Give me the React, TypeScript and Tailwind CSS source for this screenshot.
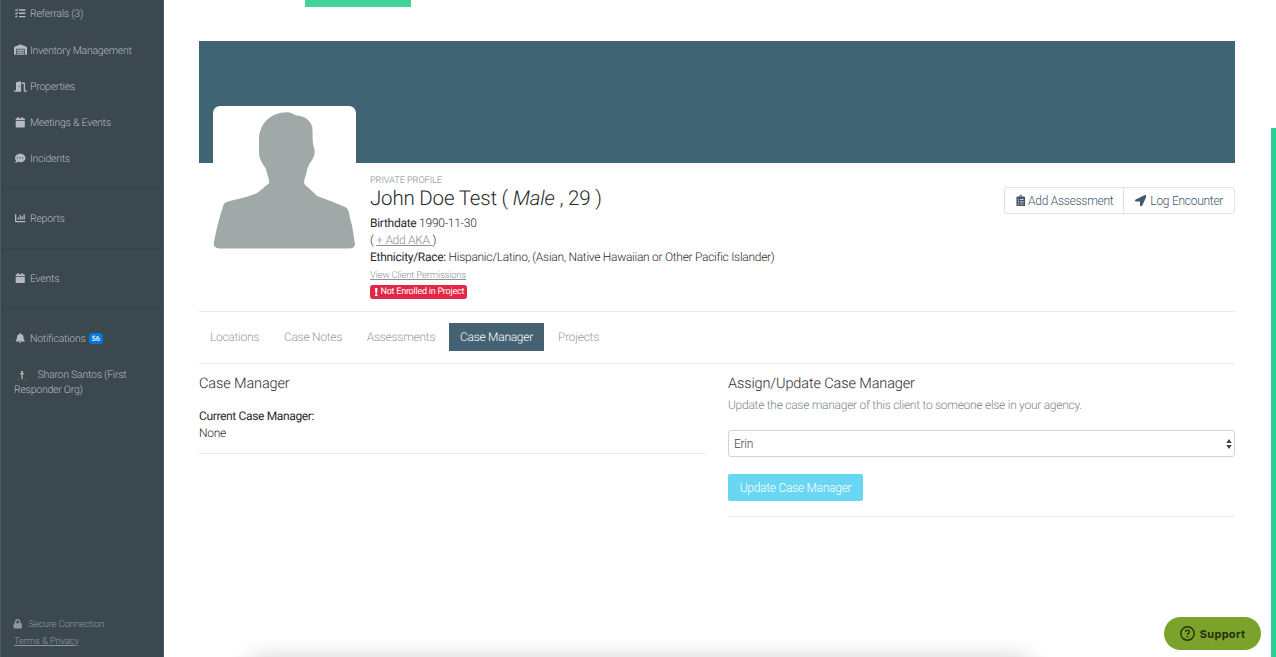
import React from "react";
import { clsx } from "clsx";
import type { IconType } from "react-icons";
import {
  FaBell,
  FaCalendar,
  FaChartBar,
  FaClipboardList,
  FaCommentDots,
  FaDoorOpen,
  FaExclamation,
  FaLocationArrow,
  FaLock,
  FaTasks,
  FaWarehouse,
} from "react-icons/fa";

const mainLinks = [
  { label: "Referrals (3)", icon: FaTasks },
  { label: "Inventory Management", icon: FaWarehouse, iconSize: 13 },
  { label: "Properties", icon: FaDoorOpen, iconSize: 13 },
  { label: "Meetings & Events", icon: FaCalendar },
  { label: "Incidents", icon: FaCommentDots },
];

const tabs = [
  { label: "Locations", width: "w-[71px]" },
  { label: "Case Notes", width: "w-[80px]" },
  { label: "Assessments", width: "w-[90px]" },
  { label: "Case Manager", width: "w-[95px]" },
  { label: "Projects", width: "w-[63px]" },
];

type NavItemProps = { label: string; icon: IconType; iconSize?: number; badge?: string };

const NavItem = ({ label, icon: Icon, iconSize = 10.5, badge }: NavItemProps) => (
  <a href="#" className="flex h-[36.25px] items-center pl-[14px] whitespace-nowrap">
    <span className="flex w-[13px] shrink-0 justify-center">
      <Icon size={iconSize} className="-mt-px shrink-0" />
    </span>
    <span className="ml-[3px]">{label}</span>
    {badge && (
      <span className="mt-px ml-[3px] rounded-[3px] bg-[#0275d8] px-[3px] text-[7.5px] leading-[11px] font-medium tracking-normal text-white">
        {badge}
      </span>
    )}
  </a>
);

const Sidebar = () => (
  <aside className="flex w-[164px] shrink-0 flex-col overflow-hidden border-x border-[#4b5962] bg-[#3b4850] text-[10.5px] font-light tracking-[-0.24px] text-[#b4babe]">
    <nav className="-mt-[4px] -ml-px">
      {mainLinks.map((link) => (
        <NavItem key={link.label} {...link} />
      ))}
      <div className="mt-[10.5px] border-t border-[#354149] pt-[12px] pb-[10.5px]">
        <NavItem label="Reports" icon={FaChartBar} />
      </div>
      <div className="border-t border-[#354149] pt-[12px] pb-[10.5px]">
        <NavItem label="Events" icon={FaCalendar} />
      </div>
      <div className="border-t border-[#354149] pt-[12px]">
        <NavItem label="Notifications" icon={FaBell} badge="56" />
        <a href="#" className="block pt-[10.5px] pl-[14px] leading-[15px]">
          <svg className="mr-[10.5px] ml-[3px] inline-block" width="10" height="10" viewBox="0 0 10 10">
            <path d="M0 9.5h2.5M7.5 9.5H10" stroke="#59656b" />
            <path d="M2.5 3.5 5 2.4l2.5 1.1L5.8 4.8v4.5H4.4V4.8z" fill="#a9b89a" />
            <circle cx="5" cy="1.8" r="1" fill="#c8bd9e" />
          </svg>
          Sharon Santos (First
          <br />
          Responder Org)
        </a>
      </div>
    </nav>
    <div className="mt-auto -ml-px pb-[7.5px] pl-[14px] text-[9.5px] leading-[17px] tracking-[-0.16px] text-[#90989d]">
      <div className="flex items-center">
        <FaLock size={9.5} className="mr-[6px] -ml-px" />
        Secure Connection
      </div>
      <a href="#" className="underline">Terms &amp; Privacy</a>
    </div>
  </aside>
);

const Avatar = () => (
  <div className="-mt-[57px] ml-[14px] h-[143px] w-[143px] shrink-0 overflow-hidden rounded-[7px] bg-white">
    <svg width="143" height="143" viewBox="0 0 143 143">
      <path
        d="M74 6.3C77 6.2 80 7.5 83 9.5C92 10 97 14 99.3 21C100 27 99 34 100.5 40C103 46 101.5 51 98 55.5C94 61 94 65 93 69C91 74 90.5 77 92 79C96 82 99 85 104 90C114 94 124 97 132 101C136 103 136 107 137 112C140 121 140.5 130 142 138C142 141 140 142.5 137 142.5H6C2 142.5 0.5 140.5 0.8 137C3 125 6 112 10.5 99C11 97 13 96 15 95.5C24 93 34 91 43 87.5C49 84 52 80 56 77.5C57 74 54 69 53 63C50 58 46 53 46 47V34C46 18 57 6.5 74 6.3Z"
        fill="#a0a9a8"
      />
    </svg>
  </div>
);

const ProfileHeader = () => (
  <header>
    <div className="h-[122px] bg-[#3f6574]" />
    <div className="flex h-[148px]">
      <Avatar />
      <div className="ml-[14px] flex flex-1 flex-col items-start pt-[10px] leading-[17px] whitespace-nowrap">
        <div className="h-[13px] text-[9.2px] leading-[16px] tracking-[-0.05px] text-[#79858b]">PRIVATE PROFILE</div>
        <h1 className="mb-[2px] text-[20.5px] leading-[27px] tracking-[-0.19px]">
          John Doe Test ( <em>Male</em> , 29 )
        </h1>
        <div>
          <span className="font-normal">Birthdate</span> 1990-11-30
        </div>
        <div>
          ( <a href="#" className="text-[#8c9191] underline">+ Add AKA </a>)
        </div>
        <div className="tracking-[-0.28px]">
          <span className="font-normal">Ethnicity/Race:</span> Hispanic/Latino, (Asian, Native Hawaiian or Other Pacific Islander)
        </div>
        <a href="#" className="mt-px text-[9.5px] tracking-[-0.17px] text-[#8c9191] underline">View Client Permissions</a>
        <span className="mt-px flex h-[14px] items-center rounded-[3px] bg-[#e12744] pt-px pr-[3px] pl-[2px] text-[9px] font-normal tracking-[-0.24px] text-white">
          <FaExclamation size={8.5} className="mb-px" />
          Not Enrolled in Project
        </span>
      </div>
      <div className="mt-[24px] flex h-[27px] rounded-[3px] border border-[#dfe3ea] text-[#43586a]">
        <button className="flex w-[119px] items-center justify-center gap-[2px] border-r border-[#dfe3ea] whitespace-nowrap">
          <FaClipboardList size={11.5} />
          Add Assessment
        </button>
        <button className="flex w-[110px] items-center justify-center gap-[4px] whitespace-nowrap">
          <FaLocationArrow size={11.5} />
          Log Encounter
        </button>
      </div>
    </div>
  </header>
);

const TabBar = () => (
  <div className="h-[53px] border-y border-[#ebebeb] pt-[11px]">
    <div className="flex h-[28px] gap-[3px]">
      {tabs.map((tab) => (
        <a
          key={tab.label}
          href="#"
          className={clsx(
            "flex items-center justify-center whitespace-nowrap",
            tab.width,
            tab.label === "Case Manager" ? "bg-[#446272] text-white" : "text-[#969b9b]"
          )}
        >
          {tab.label}
        </a>
      ))}
    </div>
  </div>
);

const CaseManager = () => (
  <div className="grid grid-cols-2 gap-x-[22px] pt-[10px] leading-[17px]">
    <section>
      <h2 className="text-[14.5px] leading-[19px] tracking-[-0.12px]">Case Manager</h2>
      <div className="mt-[15px] border-b border-[#e8e8e8] pb-[11px]">
        <div className="font-normal tracking-[-0.35px]">Current Case Manager:</div>
        <div>None</div>
      </div>
    </section>
    <section>
      <h2 className="text-[14.5px] leading-[19px] tracking-[-0.12px]">Assign/Update Case Manager</h2>
      <p className="mt-[4px] text-[#7b868b]">Update the case manager of this client to someone else in your agency.</p>
      <button className="mt-[16px] flex h-[27px] w-full items-center justify-between rounded-[3px] border border-[#d2d3d4] pr-[2px] pl-[5px] text-[#464a4c]">
        <span className="pt-px">Erin</span>
        <svg width="6" height="12" viewBox="0 0 6 12" fill="#3c4144">
          <path d="M3 1 5.7 5H0.3ZM3 11 0.3 7h5.4Z" />
        </svg>
      </button>
      <button className="mt-[17px] block h-[27px] w-[135px] rounded-[2px] bg-[#69d6f4] pt-px text-white">Update Case Manager</button>
      <hr className="mt-[15px] border-[#e8e8e8]" />
    </section>
  </div>
);

const App = () => {
  return (
    <div className="relative flex h-[657px] w-[1276px] overflow-hidden bg-white font-['Roboto',sans-serif] [text-rendering:geometricPrecision]">
      <Sidebar />
      <main className="flex-1 pr-[36px] pl-[35px] text-[12px] font-light tracking-[-0.27px] text-[#292b2c]">
        <div className="ml-[106px] h-[7px] w-[106px] bg-[#41d398]" />
        <div className="mt-[34px] w-[1036px]">
          <ProfileHeader />
          <TabBar />
          <CaseManager />
        </div>
      </main>

      {/* page edge accent */}
      <div className="mt-[128px] w-[5px] shrink-0 bg-[#28cf92]" />

      <div className="absolute top-[664px] left-[254px] h-5 w-[772px] shadow-[0_0_24px_4px_rgba(0,0,0,0.22)]" />

      <button className="absolute right-[15px] bottom-[7px] flex h-[33px] w-[97px] items-center justify-center gap-[5px] rounded-full bg-[#7ba22b] pt-px font-['Inter',sans-serif] text-[11px] font-bold tracking-[0.3px] text-[#24300d]">
        <svg className="-mt-px" width="15" height="15" viewBox="0 0 15 15" fill="none" stroke="currentColor" strokeWidth="1.4">
          <circle cx="7.5" cy="7.5" r="6.7" />
          <path d="M5.7 6a1.8 1.8 0 1 1 2.7 1.5c-.6.3-.9.6-.9 1.3" />
          <path d="M7.5 10v1.4" />
        </svg>
        Support
      </button>
    </div>
  );
};

export default App;
